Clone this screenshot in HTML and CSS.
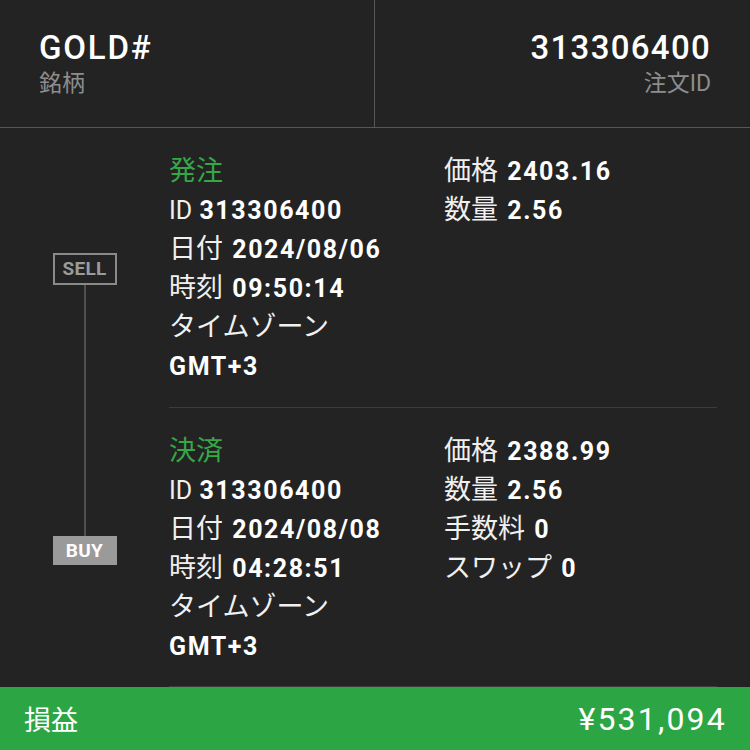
FILE: index.html
```html
<!DOCTYPE html>
<html lang="ja">
<head>
<meta charset="utf-8">
<title>GOLD# 注文</title>
<link rel="stylesheet" href="styles.css">
</head>
<body>
<div class="page">
  <header class="header">
    <div class="cell">
      <div class="title">GOLD#</div>
      <div class="sub">銘柄</div>
    </div>
    <div class="cell right">
      <div class="title num">313306400</div>
      <div class="sub">注文ID</div>
    </div>
  </header>

  <main class="body">
    <div class="rail">
      <div class="tag sell">SELL</div>
      <div class="line"></div>
      <div class="tag buy">BUY</div>
    </div>
    <div class="content">
      <section class="section">
        <div class="col">
          <div class="row head">発注</div>
          <div class="row"><span class="id">ID</span> <b class="v-id">313306400</b></div>
          <div class="row"><span class="lbl">日付</span> <b>2024/08/06</b></div>
          <div class="row"><span class="lbl">時刻</span> <b>09:50:14</b></div>
          <div class="row"><span class="lbl">タイムゾーン</span></div>
          <div class="row"><b class="solo">GMT+3</b></div>
        </div>
        <div class="col">
          <div class="row"><span class="lbl">価格</span> <b>2403.16</b></div>
          <div class="row"><span class="lbl">数量</span> <b>2.56</b></div>
        </div>
      </section>
      <section class="section">
        <div class="col">
          <div class="row head">決済</div>
          <div class="row"><span class="id">ID</span> <b class="v-id">313306400</b></div>
          <div class="row"><span class="lbl">日付</span> <b>2024/08/08</b></div>
          <div class="row"><span class="lbl">時刻</span> <b>04:28:51</b></div>
          <div class="row"><span class="lbl">タイムゾーン</span></div>
          <div class="row"><b class="solo">GMT+3</b></div>
        </div>
        <div class="col">
          <div class="row"><span class="lbl">価格</span> <b>2388.99</b></div>
          <div class="row"><span class="lbl">数量</span> <b>2.56</b></div>
          <div class="row"><span class="lbl">手数料</span> <b>0</b></div>
          <div class="row"><span class="lbl">スワップ</span> <b>0</b></div>
        </div>
      </section>
    </div>
  </main>

  <footer class="footer">
    <span class="pl-label">損益</span>
    <span class="pl-value">¥531,094</span>
  </footer>
</div>
</body>
</html>
```

FILE: styles.css
```css
html, body {
  margin: 0;
  padding: 0;
  background: #232323;
}
body {
  font-family: Roboto, "Noto Sans CJK JP", sans-serif;
  color: #f2f2f2;
}
.page {
  width: 750px;
  height: 750px;
  display: flex;
  flex-direction: column;
  overflow: hidden;
}

/* header */
.header {
  display: flex;
  height: 127px;
  border-bottom: 1px solid #575757;
  flex: none;
}
.cell {
  width: 374px;
  padding: 28px 39px 0;
  box-sizing: border-box;
}
.cell.right {
  width: 376px;
  border-left: 1px solid #575757;
  text-align: right;
  padding-right: 39px;
}
.title {
  font-size: 33px;
  line-height: 40px;
  font-weight: 500;
  color: #ffffff;
  letter-spacing: 1.8px;
}
.title.num {
  letter-spacing: 1.3px;
}
.sub {
  margin-top: 2px;
  font-size: 23px;
  line-height: 28px;
  color: #8d8d8d;
}

/* body */
.body {
  display: flex;
  flex: none;
}
.rail {
  width: 169px;
  flex: none;
  display: flex;
  flex-direction: column;
  align-items: center;
  padding-top: 125px;
  box-sizing: border-box;
}
.tag {
  width: 64px;
  box-sizing: border-box;
  font-size: 19px;
  font-weight: 700;
  text-align: center;
  letter-spacing: 0.3px;
}
.tag.sell {
  height: 32px;
  line-height: 28px;
  border: 2px solid #8a8a8a;
  color: #9b9b9b;
}
.line {
  width: 2px;
  height: 251px;
  background: #4f4f4f;
}
.tag.buy {
  height: 29px;
  line-height: 29px;
  background: #9a9a9a;
  color: #ffffff;
}

.content {
  width: 548px;
  flex: none;
}
.section {
  display: grid;
  grid-template-columns: 275px 1fr;
  padding: 24px 0 21px;
  border-bottom: 1px solid #3c3c3c;
}
.section + .section {
  padding-bottom: 20px;
}
.row {
  font-size: 25px;
  line-height: 39px;
  height: 39px;
  white-space: nowrap;
  color: #f0f0f0;
}
.row.head {
  font-size: 27px;
  color: #35a846;
}
.lbl {
  font-size: 27px;
  font-weight: 400;
}
.id {
  font-weight: 400;
}
.row b {
  font-weight: 700;
  color: #ffffff;
  letter-spacing: 1.6px;
  margin-left: 3px;
}
.row b.v-id {
  margin-left: 1px;
}
.row b.solo {
  margin-left: 0;
}

/* footer */
.footer {
  flex: 1;
  background: #2ca544;
  display: flex;
  align-items: center;
  justify-content: space-between;
  padding: 0 23px 0 24px;
  color: #ffffff;
}
.pl-label {
  font-size: 27px;
}
.pl-value {
  font-size: 32px;
  letter-spacing: 2.2px;
}
```
